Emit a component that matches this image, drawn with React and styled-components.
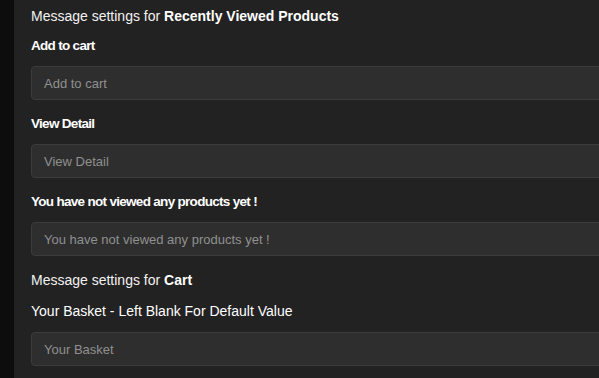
import styled, { createGlobalStyle } from "styled-components";

/** global page reset */
const GlobalStyle = createGlobalStyle`
  html, body {
    margin: 0;
    padding: 0;
    overflow: hidden;
    background-color: #0d0d0d;
    font-family: "Liberation Sans", Arial, sans-serif;
  }
`;

const Layout = styled.div`
  display: flex;
  min-height: 100vh;
`;

const SideStrip = styled.div`
  width: 14px;
  flex-shrink: 0;
  background-color: #0d0d0d;
`;

const Panel = styled.main`
  flex: 1;
  background-color: #222222;
  padding: 6px 0 0 17px;
`;

const Form = styled.div`
  width: 640px;
`;

const SectionTitle = styled.h3`
  margin: ${(props) => (props.spaced ? "1px" : "0")} 0 10px;
  font-size: 14px;
  line-height: 20px;
  font-weight: 400;
  color: #f2f2f2;
  b {
    font-weight: 700;
    color: #ffffff;
  }
`;

const Field = styled.div`
  display: flex;
  flex-direction: column;
  margin-bottom: 14px;
`;

const Label = styled.label`
  /** bold labels are set tight, the last one is plain */
  font-size: ${(props) => (props.plain ? "14px" : "13.5px")};
  font-weight: ${(props) => (props.plain ? 400 : 700)};
  letter-spacing: ${(props) => (props.plain ? "0" : "-0.7px")};
  line-height: ${(props) => (props.plain ? "22px" : "20px")};
  color: #ffffff;
  margin-bottom: 10px;
`;

const Input = styled.input`
  box-sizing: border-box;
  height: 34px;
  width: 100%;
  padding: 0 12px;
  border: 1px solid #3c3c3c;
  border-radius: 4px;
  background-color: #2e2e2e;
  color: #e0e0e0;
  font-family: "Liberation Sans", Arial, sans-serif;
  font-size: 13px;
  outline: none;
  &::placeholder {
    color: #909090;
  }
`;

const fields = [
  { label: "Add to cart" },
  { label: "View Detail" },
  { label: "You have not viewed any products yet !" },
];

export default function App() {
  return (
    <>
      <GlobalStyle />
      <Layout>
        <SideStrip />
        <Panel>
          <Form>
            <SectionTitle>
              Message settings for <b>Recently Viewed Products</b>
            </SectionTitle>
            {fields.map((f) => (
              <Field key={f.label}>
                <Label>{f.label}</Label>
                <Input placeholder={f.label} />
              </Field>
            ))}
            <SectionTitle spaced>
              Message settings for <b>Cart</b>
            </SectionTitle>
            <Field>
              <Label plain>Your Basket - Left Blank For Default Value</Label>
              <Input placeholder="Your Basket" />
            </Field>
          </Form>
        </Panel>
      </Layout>
    </>
  );
}
